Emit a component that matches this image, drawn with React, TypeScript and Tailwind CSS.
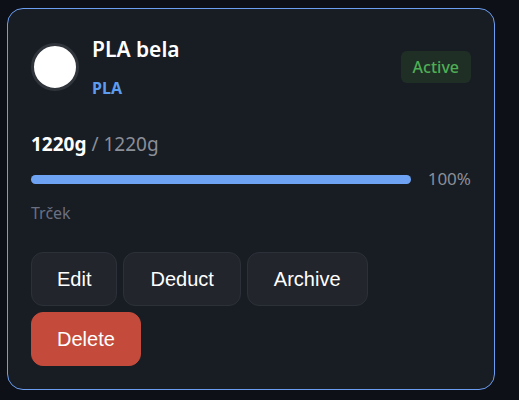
export default function App() {
  const used = 1220
  const total = 1220
  const pct = Math.round((used / total) * 100)

  return (
    <div className="h-[400px] w-[519px] bg-[#0d1017] pl-[7px] pt-[8px]">
      <div className="w-[488px] h-[382px] rounded-2xl border border-[#6b9ef0] bg-[#181c23] px-[23px] pt-[26px] pb-6 font-['Noto_Sans',sans-serif]">
        <div className="flex items-center justify-between">
          <div className="flex items-center gap-[13px]">
            <div className="w-12 h-12 rounded-full bg-white border-[3px] border-[#30343b]" />
            <div>
              <div className="text-[21px] leading-7 font-semibold text-white">PLA bela</div>
              <div className="mt-[15px] text-[16px] leading-5 font-bold text-[#5b9cf0]">PLA</div>
            </div>
          </div>
          <span className="rounded-md bg-[#1f2f26] px-3 py-[4px] text-[16px] leading-6 font-medium text-[#4fae55]">Active</span>
        </div>

        <div className="mt-[32px] text-[19px] leading-7">
          <span className="font-bold text-white">{used}g</span>
          <span className="text-[#8a8f98]"> / {total}g</span>
        </div>

        <div className="mt-[9px] flex items-center gap-[17px]">
          <div className="h-[9px] flex-1 rounded-full bg-[#2a2f38]">
            <div className="h-full rounded-full bg-[#6ea2f2]" style={{ width: `${pct}%` }} />
          </div>
          <span className="text-[17px] leading-6 text-[#8a8f98]">{pct}%</span>
        </div>

        <div className="mt-[10px] text-[16px] leading-6 text-[#6b7080]">Trček</div>

        <div className="mt-[27px] flex flex-wrap gap-[6px] font-['Liberation_Sans',Arial,sans-serif] text-[20px] leading-6 text-white">
          <button className="rounded-xl border border-[#2c3038] bg-[#22252c] px-[25px] py-[14px]">Edit</button>
          <button className="rounded-xl border border-[#2c3038] bg-[#22252c] px-[26px] py-[14px]">Deduct</button>
          <button className="rounded-xl border border-[#2c3038] bg-[#22252c] px-[26px] py-[14px]">Archive</button>
          <button className="rounded-xl border border-[#c44b3b] bg-[#c44b3b] px-[25px] py-[14px]">Delete</button>
        </div>
      </div>
    </div>
  )
}
